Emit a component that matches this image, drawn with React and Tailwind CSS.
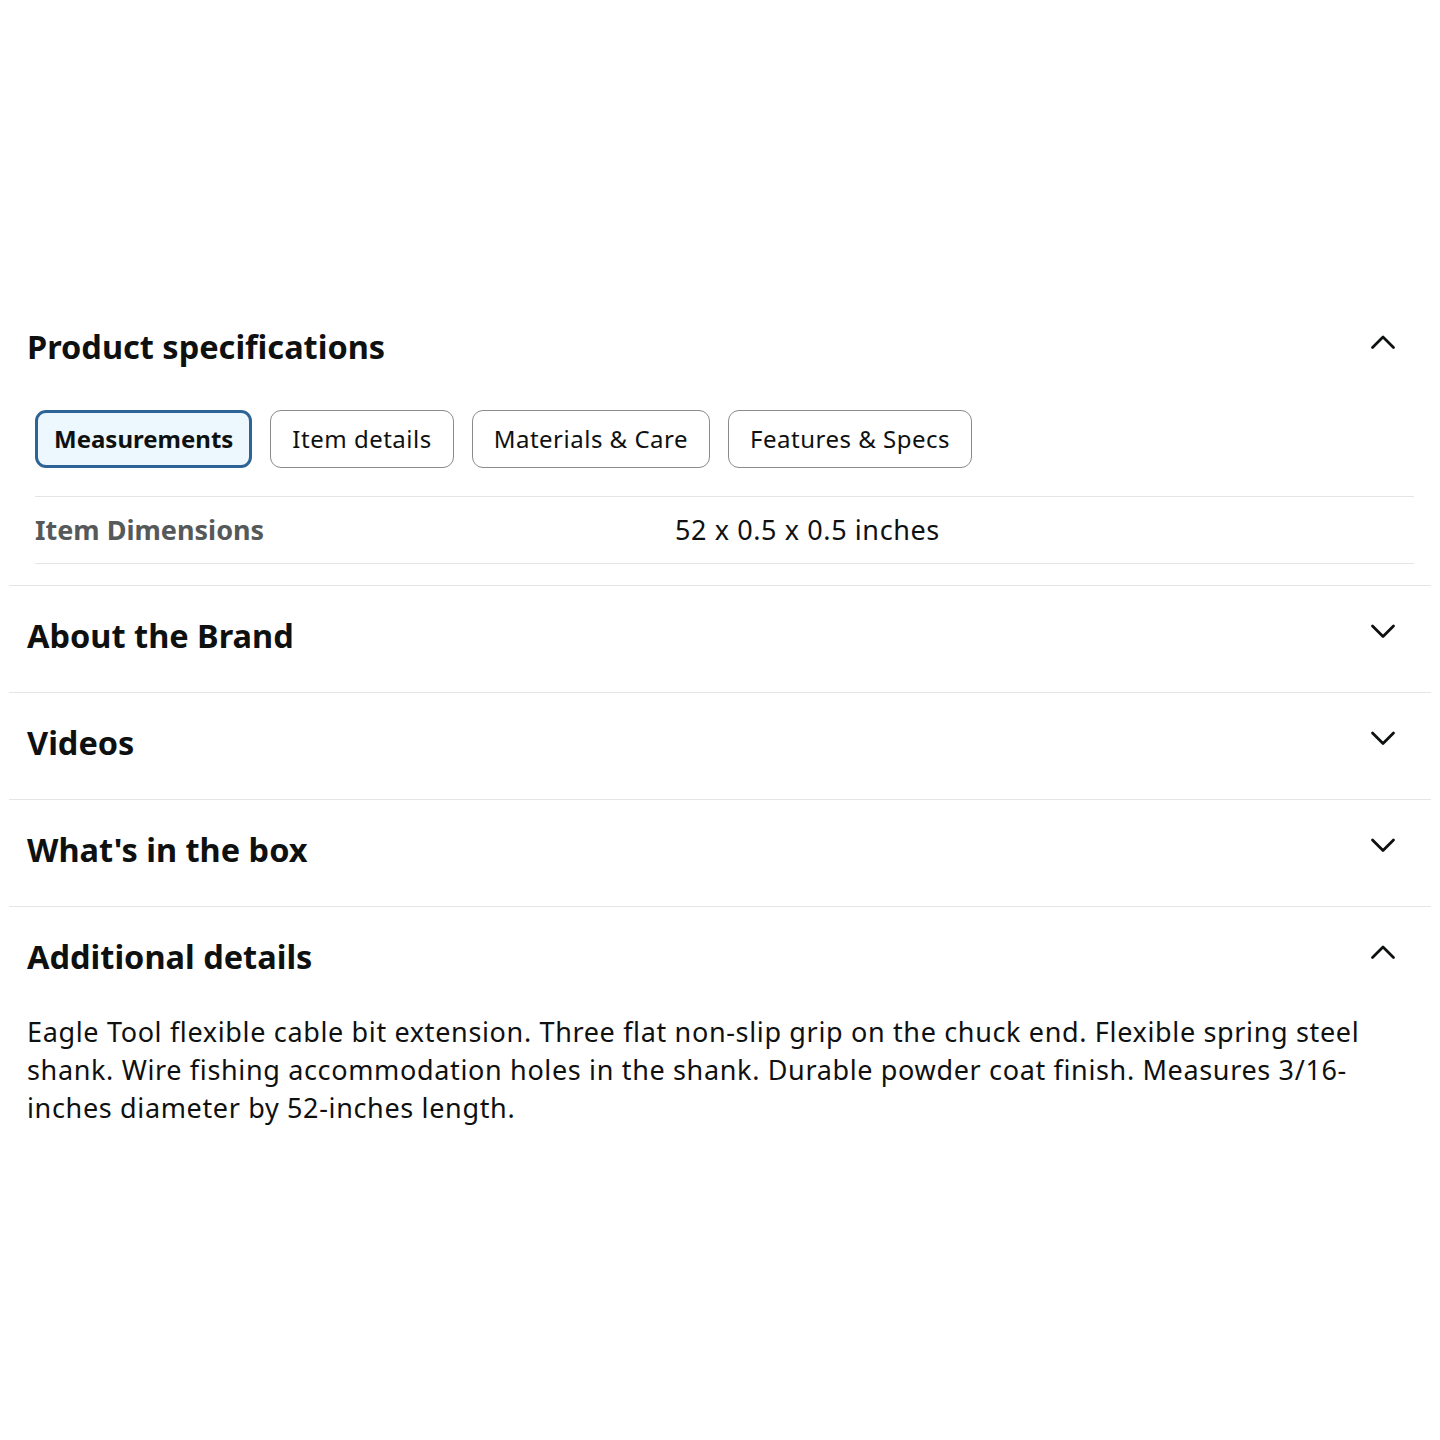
import React, { useState } from 'react';

const FONT = { fontFamily: '"Noto Sans", "Open Sans", Arial, sans-serif' };

const TABS = ['Measurements', 'Item details', 'Materials & Care', 'Features & Specs'];

const Chevron = ({ up }) => (
  <svg width="28" height="28" viewBox="0 0 28 28" fill="none" className="shrink-0">
    <path
      d={up ? 'M3.5 19.5 L14 9 L24.5 19.5' : 'M3.5 9 L14 19.5 L24.5 9'}
      stroke="#0f1111"
      strokeWidth="2.8"
      strokeLinecap="round"
      strokeLinejoin="round"
    />
  </svg>
);

const SectionHeader = ({ title, open }) => (
  <div className="flex items-center justify-between pl-[18px] pr-[34px] pb-[5px] h-[106px]">
    <h2 className="text-[32.5px] font-bold text-[#0f1111] leading-none">{title}</h2>
    <div className="-mt-[12px]">
      <Chevron up={open} />
    </div>
  </div>
);

const App = () => {
  const [tab, setTab] = useState(0);

  return (
    <div className="bg-white min-h-[1440px] pt-[297px] px-[9px]" style={FONT}>
      {/* Product specifications */}
      <div className="border-b border-[#e3e6e6]">
        <SectionHeader title="Product specifications" open />
        <div className="flex gap-[18px] pl-[26px] mt-[7px]">
          {TABS.map((t, i) => (
            <button
              key={t}
              onClick={() => setTab(i)}
              className={
                i === tab
                  ? 'h-[58px] px-[16px] rounded-[11px] border-[3px] border-[#2e6495] bg-[#edf7fe] text-[24px] font-bold text-[#0f1111]'
                  : 'h-[58px] px-[21px] rounded-[11px] border border-[#888c8c] bg-white text-[24px] tracking-[0.5px] text-[#0f1111]'
              }
            >
              {t}
            </button>
          ))}
        </div>
        <div className="ml-[26px] mr-[17px] mt-[28px] mb-[21px] border-t border-b border-[#e3e6e6]">
          <div className="flex items-center h-[66px]">
            <div className="w-[640px] text-[27px] font-bold text-[#565959]">Item Dimensions</div>
            <div className="text-[27px] tracking-[0.6px] text-[#0f1111]">52 x 0.5 x 0.5 inches</div>
          </div>
        </div>
      </div>

      <div className="border-b border-[#e3e6e6]">
        <SectionHeader title="About the Brand" />
      </div>
      <div className="border-b border-[#e3e6e6]">
        <SectionHeader title="Videos" />
      </div>
      <div className="border-b border-[#e3e6e6]">
        <SectionHeader title="What's in the box" />
      </div>

      {/* Additional details */}
      <div>
        <SectionHeader title="Additional details" open />
        <p className="pl-[18px] pr-[50px] text-[27px] tracking-[0.65px] leading-[38px] text-[#0f1111]">
          Eagle Tool flexible cable bit extension. Three flat non-slip grip on the chuck end. Flexible spring steel shank. Wire fishing accommodation holes in the shank. Durable powder coat finish. Measures 3/16-inches diameter by 52-inches length.
        </p>
      </div>
    </div>
  );
};

export default App;
